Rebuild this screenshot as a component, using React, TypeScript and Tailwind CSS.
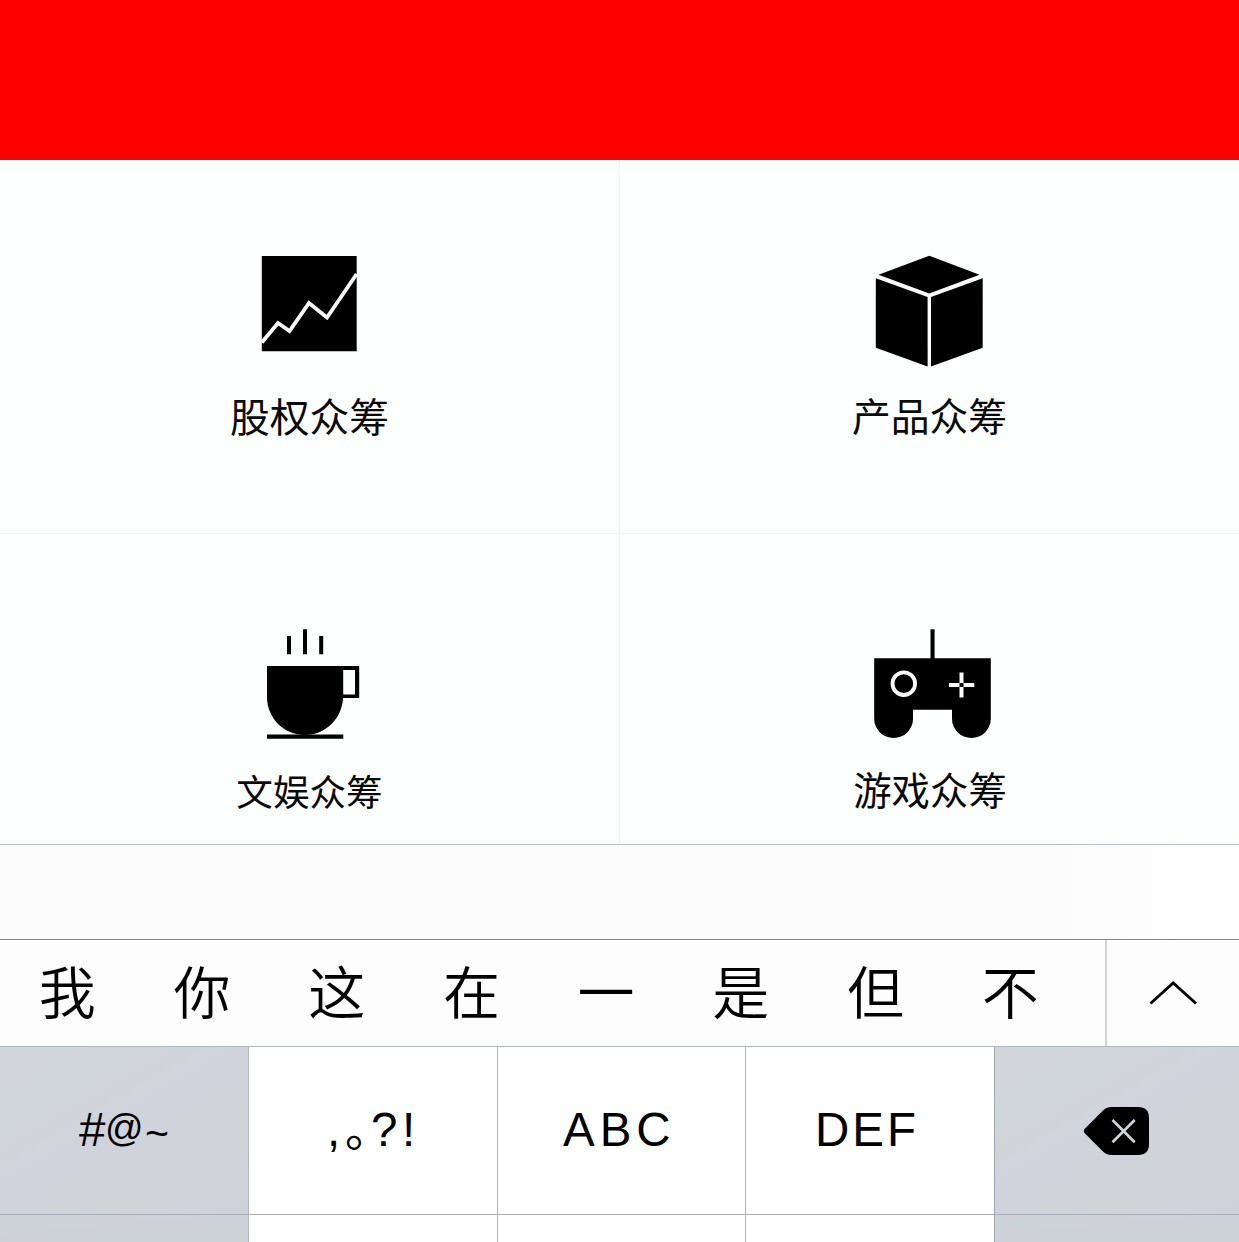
import type { ReactNode } from "react";

const cjk = "font-['Noto_Sans_CJK_SC',sans-serif]";
const latin = "font-['Liberation_Sans','Noto_Sans_CJK_SC',sans-serif]";

function ChartIcon() {
  return (
    <svg width="160" height="120" viewBox="230 250 160 120">
      <path d="M261.8 256H356.7V351.2H261.8Z" fill="#000" />
      <path d="M261.8 342.5L278 323L289.5 331L309 303L327 317.5L356.7 274" fill="none" stroke="#fcfdfd" strokeWidth="3.8" />
    </svg>
  );
}

function BoxIcon() {
  return (
    <svg width="160" height="120" viewBox="850 250 160 120">
      <path d="M929.3 255.8L979.5 274.8L929.3 293.6L878.5 274.8Z" />
      <path d="M875.8 278.3L927.6 297V366.5L875.8 347.8Z" />
      <path d="M982.7 278.3L931 297V366.5L982.7 347.8Z" />
    </svg>
  );
}

function CupIcon() {
  return (
    <svg width="160" height="120" viewBox="230 624 160 120">
      <path d="M287 636H291V654.3H287ZM303 629.3H307V654.3H303ZM319.2 636H323.2V654.3H319.2Z" />
      <path d="M267 666H359.2V698H343C342 719 325 735 305 735C284 735 267 718 267 697Z" />
      <path d="M343.2 670H355V694.5H343.2Z" fill="#fcfdfd" />
      <path d="M267 734.6H343.3V738.7H267Z" />
    </svg>
  );
}

function GamepadIcon() {
  return (
    <svg width="160" height="120" viewBox="850 624 160 120">
      <path d="M930.5 629.3H934.6V659H930.5Z" />
      <path d="M874.2 658.2H990.8V718.7A19.4 19.4 0 0 1 952 718.7V709.7H913V718.7A19.4 19.4 0 0 1 874.2 718.7Z" />
      <circle cx="903.8" cy="683.7" r="11.3" fill="none" stroke="#fcfdfd" strokeWidth="3.8" />
      <path d="M949 684.9H959.5M963.5 684.9H974.3M961.5 672.5V683M961.5 687V697.6" stroke="#fcfdfd" strokeWidth="4" />
    </svg>
  );
}

function Tile({ icon, className, children }: { icon: ReactNode; className: string; children: ReactNode }) {
  return (
    <div className="flex flex-col items-center overflow-hidden bg-[#fdfefe] pt-[90px]">
      {icon}
      <div className={`h-[60px] whitespace-nowrap leading-[60px] text-[#0a0a0a] ${cjk} ${className}`}>{children}</div>
    </div>
  );
}

const grayKey = "bg-[linear-gradient(150deg,#d2d6da_0%,#d0d5d9_28%,#d0d3dc_48%,#d0d4d8_68%,#cfd2da_100%)]";

export default function App() {
  return (
    <div className="flex h-[1242px] w-[1239px] flex-col overflow-hidden bg-[#fdfdfd] text-black">
      <div className="h-[160px] bg-[#ff0000]" />

      <div className="grid h-[684px] grid-cols-[619px_619px] grid-rows-[373px_310px] gap-px overflow-hidden bg-[#eff3f3]">
        <Tile icon={<ChartIcon />} className="mt-[15px] text-[39.8px]">股权众筹</Tile>
        <Tile icon={<BoxIcon />} className="mt-[14px] text-[38.8px]">产品众筹</Tile>
        <Tile icon={<CupIcon />} className="mt-[17px] text-[36.6px]">文娱众筹</Tile>
        <Tile icon={<GamepadIcon />} className="mt-[14px] pl-px text-[38.4px]">游戏众筹</Tile>
      </div>

      <div className="h-[95px] border-t border-[#b9c1ca] bg-[linear-gradient(90deg,#fcfcfd_0%,#fcfcfd_85%,#fefefe_96%)]" />

      <div className="flex h-[107px] border-t border-[#80849a] bg-[#fdfdfd]">
        <div className={`flex w-[1107px] border-r-2 border-[#d2d2d4] text-[57px] font-[350] leading-[98px] ${cjk}`}>
          {["我", "你", "这", "在", "一", "是", "但", "不"].map((c) => (
            <span key={c} className="w-[134.7px] shrink-0 text-center">{c}</span>
          ))}
        </div>
        <div className="flex flex-1 items-center justify-center">
          <svg width="50" height="30" viewBox="1148 978 50 30">
            <path d="M1150.5 1003.5L1173.2 983L1196 1003.5" fill="none" stroke="#000" strokeWidth="2.8" />
          </svg>
        </div>
      </div>

      <div className={`grid h-[168px] grid-cols-[249px_249px_248px_249px_244px] grid-rows-[167px] border-t border-[#b0b7c2] text-[47.5px] leading-[165px] ${latin}`}>
        <div className={`flex border-r border-[#b0b9c4] pl-[79px] ${grayKey}`}>
          <span className="w-[26px]">#</span>
          <span className="w-[40px] text-[38px] leading-[162px]">@</span>
          <span className="text-[41px] leading-[173px]">~</span>
        </div>
        <div className="flex border-r border-[#b0b7c2] bg-white pl-[78px]">
          <span className="w-[18px]">,</span>
          <span className={`w-[26px] text-[46px] leading-[158px] [font-feature-settings:'halt'] ${cjk}`}>。</span>
          <span className="w-[31px]">?</span>
          <span>!</span>
        </div>
        <div className="border-r border-[#b0b7c2] bg-white pl-[65px] tracking-[5px]">ABC</div>
        <div className="border-r border-[#a0a7b2] bg-white pl-[69px] tracking-[3px]">DEF</div>
        <div className={`flex items-center pl-[87px] ${grayKey}`}>
          <svg width="70" height="52" viewBox="1082 1105 70 52">
            <path d="M1084.5 1129L1103 1110.5C1106 1107.7 1108 1107 1112 1107H1138Q1149 1107 1149 1118V1144Q1149 1155 1138 1155H1112C1108 1155 1106 1154.3 1103 1151.5L1084.5 1133Q1083 1131 1084.5 1129Z" />
            <path d="M1112.5 1120L1134.7 1142.2M1134.7 1120L1112.5 1142.2" stroke="#d0d4da" strokeWidth="2.7" />
          </svg>
        </div>
      </div>

      <div className="grid h-[28px] grid-cols-[249px_249px_248px_249px_244px] border-t border-[#a6acb8]">
        <div className="border-r border-[#b0b9c4] bg-[linear-gradient(175deg,#cfd2da,#cdd2d6)]" />
        <div className="border-r border-[#b0b7c2] bg-white" />
        <div className="border-r border-[#b0b7c2] bg-white" />
        <div className="border-r border-[#a0a7b2] bg-white" />
        <div className="bg-[linear-gradient(175deg,#cfd2da,#cdd2d6)]" />
      </div>
    </div>
  );
}
